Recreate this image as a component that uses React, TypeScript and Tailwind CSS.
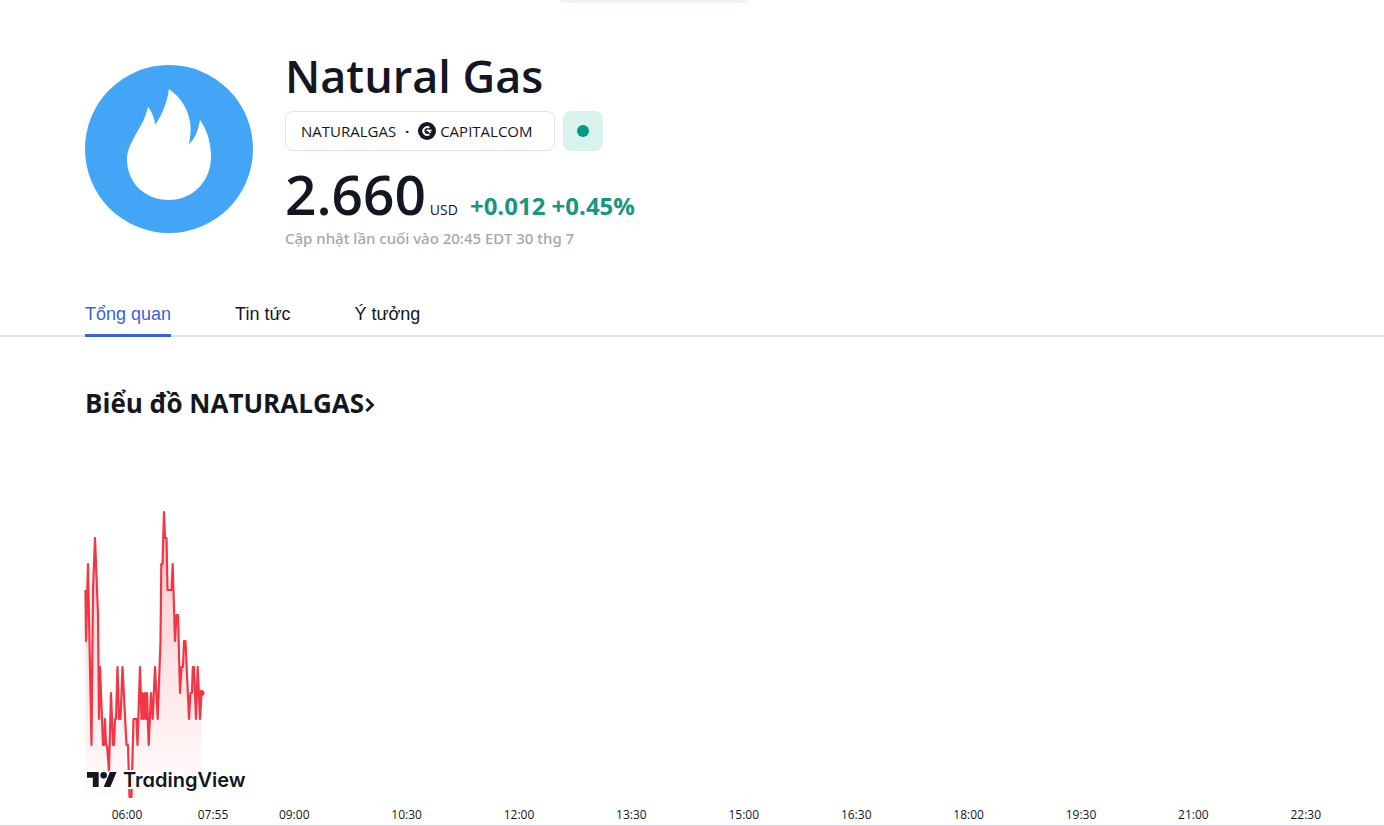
const linePoints: [number, number][] = [
  [0.5, 590], [1, 641], [3, 564], [6.5, 745], [8, 590], [10, 538], [13, 615], [14, 719],
  [15, 667], [18, 745], [19, 745], [20, 719], [21, 745], [22, 745], [24, 771], [26, 693],
  [28, 745], [29, 745], [30, 719], [31, 719], [32.5, 667], [34, 719], [35.5, 719], [37.5, 667],
  [41.5, 745], [43, 745], [44.5, 797], [46.5, 797], [48.5, 719], [51.5, 719], [52.5, 745], [55, 667],
  [56.5, 719], [57.5, 693], [58.7, 719], [59.8, 693], [61, 719], [62, 693], [63.7, 745], [66, 693],
  [67.7, 719], [70, 667], [72.7, 719], [75.5, 641], [76.3, 564], [77.5, 564], [79, 512], [80, 538], [81.5, 538],
  [82.5, 590], [86.5, 590], [87.7, 564], [90, 641], [91.5, 615], [93, 615], [95, 693], [96.5, 667],
  [98, 667], [99, 641], [100.5, 641], [104, 719], [105.5, 693], [107, 693], [107.8, 667], [109, 667],
  [111, 719], [112.7, 667], [115, 719], [116.5, 693],
];
const linePath = linePoints.map(([x, y]) => `${x},${y - 500}`).join(" ");

const times = ["09:00", "10:30", "12:00", "13:30", "15:00", "16:30", "18:00", "19:30", "21:00", "22:30"];

function FlameLogo() {
  return (
    <svg viewBox="0 0 168 168" className="h-[168px] w-[168px] shrink-0" role="img" aria-label="Natural Gas">
      <circle cx="84" cy="84" r="84" fill="#42a5f5" />
      <path
        fill="#fff"
        d="M84 24 C95 32 103 43 105 57 C106.500 65 105 73 104 79 C110 74 113 66 115 55 C122 65 126 77 126 92 C126 117 107 135 84 135 C60 135 42 118 42 94 C42 84 47 77 52 67 C57 59 61 51 63 42 C67 47 70 54 70 60 C77 50 82 38 84 24Z"
      />
    </svg>
  );
}

function CapitalLogo() {
  return (
    <svg viewBox="0 0 18 18" className="h-[18px] w-[18px]" aria-hidden="true">
      <circle cx="9" cy="9" r="9" fill="#131722" />
      <path d="M11.500 5.800A3.900 3.900 0 1 0 11.500 12.200" fill="none" stroke="#fff" strokeWidth="2" />
      <path d="M8 8.600L10 7L11.500 8L13.500 7.200V9.200H12L13.500 10.500L11.500 11L10.500 9.700z" fill="#fff" />
    </svg>
  );
}

function Chart() {
  return (
    <svg viewBox="0 0 160 300" className="block h-[300px] w-[160px] overflow-visible" role="img" aria-label="NATURALGAS">
      <defs>
        <linearGradient id="area" x1="0" y1="12" x2="0" y2="297" gradientUnits="userSpaceOnUse">
          <stop offset="0" stopColor="#f23645" stopOpacity="0.28" />
          <stop offset="1" stopColor="#f23645" stopOpacity="0.01" />
        </linearGradient>
      </defs>
      <polygon points={`0,297 ${linePath} 116.5,297`} fill="url(#area)" />
      <polyline points={linePath} fill="none" stroke="#f23645" strokeWidth="2.200" strokeLinejoin="round" />
      <circle cx="116.500" cy="193" r="3" fill="#f23645" />
    </svg>
  );
}

export default function App() {
  return (
    <div className="overflow-hidden bg-white font-['Open_Sans','Noto_Sans',sans-serif] text-[#131722]">
      <div className="mx-auto h-[3px] w-[188px] -translate-x-[38px] rounded-b-xl bg-[#f0f3fa]" />
      <header className="flex gap-8 pl-[85px] pt-[46px]">
        <div className="pt-4">
          <FlameLogo />
        </div>
        <div>
          <h1 className="text-[45px] font-semibold leading-[54px]">Natural Gas</h1>
          <div className="mt-2 flex gap-2">
            <button className="flex h-10 w-[270px] items-center rounded-lg border border-[#e0e3eb] px-[15px] text-[15px] leading-6">
              <span>NATURALGAS</span>
              <span className="w-[22px] text-center font-bold">·</span>
              <CapitalLogo />
              <span className="ml-1">CAPITALCOM</span>
            </button>
            <button aria-label="Market status" className="flex h-10 w-10 items-center justify-center rounded-lg bg-[#daf2ee]">
              <span className="h-3 w-3 rounded-full bg-[#089981]" />
            </button>
          </div>
          <div className="mt-[13px] flex items-baseline">
            <span className="text-[55px] font-semibold leading-[60px]">2.660</span>
            <span className="ml-1 text-sm leading-none">USD</span>
            <span className="ml-3 text-[24px] font-bold leading-none text-[#16977f]">+0.012 +0.45%</span>
          </div>
          <p className="mt-0.5 font-['Noto_Sans',sans-serif] text-[15px] font-medium leading-6 text-[#a3a6af]">Cập nhật lần cuối vào 20:45 EDT 30 thg 7</p>
        </div>
      </header>

      <nav className="mt-10 flex h-[47px] gap-16 border-b-2 border-[#e0e3eb] pl-[85px] font-['Liberation_Sans',sans-serif] text-[18px] leading-[48px]">
        <a href="#overview" className="-mb-0.5 h-[47px] border-b-3 border-[#3861e0] text-[#3861e0]">Tổng quan</a>
        <a href="#news">Tin tức</a>
        <a href="#ideas">Ý tưởng</a>
      </nav>

      <h2 className="mt-12 pl-[85px] text-[26px] font-bold leading-9">
        <a href="#chart" className="inline-flex items-center">
          Biểu đồ NATURALGAS
          <svg viewBox="0 0 12 16" className="mt-1 h-4 w-3" aria-hidden="true">
            <path d="M2.500 2L8.500 8L2.500 14" fill="none" stroke="#131722" strokeWidth="2.800" />
          </svg>
        </a>
      </h2>

      <section id="chart" className="border-b border-[#d1d4dc] pt-[79px]">
        <div className="relative pl-[85px]">
          <Chart />
          <a href="#tradingview" className="absolute bottom-2 left-[87px] flex items-center gap-1.5 text-[#131722]">
            <svg viewBox="0 4 36 18" className="-mt-0.5 h-[15px] w-[30px] overflow-visible" aria-hidden="true">
              <path d="M14 22H7V11H0V4h14v18zM28 22h-8l7.500-18h8L28 22zM24 8a4 4 0 1 1-8 0a4 4 0 1 1 8 0z" fill="#131722" stroke="#fff" strokeWidth="3" paintOrder="stroke" />
            </svg>
            <span className="font-['Inter',sans-serif] text-[20px] font-semibold leading-6 [-webkit-text-stroke:4px_white] [font-feature-settings:'cv11'] [paint-order:stroke_fill]">TradingView</span>
          </a>
        </div>
        <div className="flex pl-[102px] pr-[22px] pt-1 text-center text-xs leading-[21px]">
          <span className="w-[50px]">06:00</span>
          <span className="ml-9 w-[50px]">07:55</span>
          <div className="grid flex-1 grid-cols-10">
            {times.map((time) => (
              <span key={time}>{time}</span>
            ))}
          </div>
        </div>
      </section>
    </div>
  );
}
